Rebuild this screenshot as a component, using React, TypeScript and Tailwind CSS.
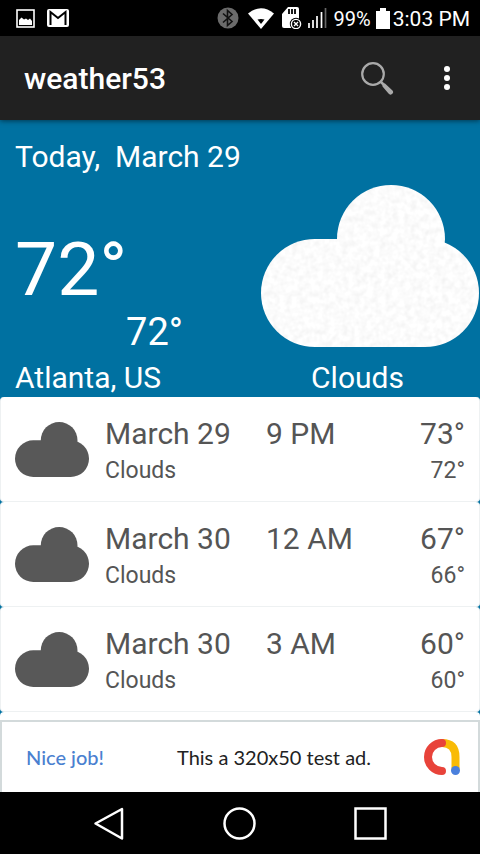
import { clsx } from 'clsx';

interface Forecast {
    date: string;
    time: string;
    condition: string;
    high: number;
    low: number;
}

const forecasts: Forecast[] = [
    { date: 'March 29', time: '9 PM', condition: 'Clouds', high: 73, low: 72 },
    { date: 'March 30', time: '12 AM', condition: 'Clouds', high: 67, low: 66 },
    { date: 'March 30', time: '3 AM', condition: 'Clouds', high: 60, low: 60 },
];

function Cloud({ className, textured }: { className?: string; textured?: boolean }) {
    return (
        <svg viewBox="0 0 218 162" className={clsx('block shrink-0', className)} aria-hidden="true">
            {textured && (
                <filter id="paper" x="0" y="0" width="1" height="1">
                    <feTurbulence type="fractalNoise" baseFrequency="0.16" numOctaves="2" seed="4" />
                    <feColorMatrix values="0.2 0 0 0 0.87  0.2 0 0 0 0.87  0.2 0 0 0 0.87  0 0 0 0 1" />
                    <feComposite in2="SourceGraphic" operator="in" />
                </filter>
            )}
            <g fill="currentColor" filter={textured ? 'url(#paper)' : undefined}>
                <circle cx="130" cy="54" r="54" />
                <rect y="54" width="218" height="108" rx="54" />
            </g>
        </svg>
    );
}

function StatusBar() {
    return (
        <div className="flex h-9 items-center justify-between bg-black pr-[10px] pl-4 text-white">
            <div className="flex items-center gap-3">
                <svg width="19" height="19" viewBox="0 0 19 19">
                    <rect x="1" y="1" width="17" height="17" fill="none" stroke="#fff" strokeWidth="1.6" />
                    <path d="M3 16V11L5.500 8.500L8 10.500L10 9.500L12 11L14 9.500L16 12V16Z" fill="#fff" />
                </svg>
                <svg width="22" height="18" viewBox="0 0 22 18">
                    <rect width="22" height="18" rx="2" fill="#fff" />
                    <path d="M3.500 16V3L11 9L18.500 3V16" fill="none" stroke="#000" strokeWidth="2" />
                </svg>
            </div>
            <div className="flex items-center">
                <svg width="22" height="22" viewBox="0 0 22 22" className="mr-[9px]">
                    <circle cx="11" cy="11" r="10.500" fill="#6b6b6b" />
                    <path d="M6 6.500L15 14.500L10.500 18.500V3.500L15 7.500L6 15.500" fill="none" stroke="#111" strokeWidth="1.6" />
                </svg>
                <svg width="26" height="21" viewBox="0 0 26 21" className="mr-2">
                    <path d="M0 5.500Q13 -5 26 5.500L13 21Z" fill="#fff" />
                    <path d="M9.500 11.500Q13 10.500 16.500 11.500L13 16Z" fill="#000" />
                </svg>
                <svg width="20" height="22" viewBox="0 0 20 22" className="mr-[6px]">
                    <path d="M6 0H15Q17 0 17 2V21H2Q0 21 0 19V7Z" fill="#fff" />
                    <path d="M7 2V7M10 2V7M13 2V7" stroke="#000" strokeWidth="1.8" />
                    <circle cx="14" cy="17" r="6.200" fill="#000" />
                    <circle cx="14" cy="17" r="4.600" fill="none" stroke="#fff" strokeWidth="1.4" />
                    <path d="M12 15L16 19M16 15L12 19" stroke="#fff" strokeWidth="1.4" />
                </svg>
                <svg width="19" height="22" viewBox="0 0 19 22" className="mr-[7px]">
                    <path d="M1 21V16M5 21V13M9 21V9M13.500 21V5" stroke="#fff" strokeWidth="1.7" />
                    <path d="M17.500 21V1" stroke="#666" strokeWidth="1.7" />
                </svg>
                <span className="mr-[5px] pt-px text-[20px] leading-6">99%</span>
                <svg width="14" height="21" viewBox="0 0 14 21" className="mr-[3px]">
                    <path d="M4 0H10V3H14V21H0V3H4Z" fill="#fff" />
                </svg>
                <span className="pt-px text-[21px] leading-6">3:03 PM</span>
            </div>
        </div>
    );
}

function Toolbar() {
    return (
        <header className="relative z-10 flex h-21 items-center bg-[#212121] pr-[17px] pl-6 text-white shadow-[0_1px_5px_rgba(0,0,0,0.5)]">
            <h1 className="grow pt-px text-[30px] leading-9 font-medium">weather53</h1>
            <button type="button" aria-label="Search" className="mr-9">
                <svg width="36" height="36" viewBox="0 0 36 36" className="block">
                    <circle cx="14" cy="14" r="10.800" fill="none" stroke="#aaa" strokeWidth="2.200" />
                    <path d="M21.500 21.500L25 25" stroke="#aaa" strokeWidth="2.500" />
                    <path d="M26 23.500L33.500 30.500Q35 32.500 33 34Q31 35.500 29.500 33.500L23.500 26.500Q23 23 26 23.500Z" fill="#aaa" />
                </svg>
            </button>
            <button type="button" aria-label="More options" className="flex w-8 justify-center">
                <svg width="6" height="26" viewBox="0 0 6 26" fill="#fff">
                    <circle cx="3" cy="4" r="3" />
                    <circle cx="3" cy="13" r="3" />
                    <circle cx="3" cy="22" r="3" />
                </svg>
            </button>
        </header>
    );
}

function Today() {
    return (
        <section className="px-[15px] pt-[19px] text-white">
            <h2 className="text-[30px] leading-9 whitespace-pre">Today,  March 29</h2>
            <div className="mt-[10px] flex justify-between">
                <div className="w-42 pt-11">
                    <p className="text-[75px] leading-20">72°</p>
                    <p className="mt-[3px] text-right text-[38px] leading-10">72°</p>
                </div>
                <Cloud className="-mr-[14px] h-[162px] w-[218px]" textured />
            </div>
            <div className="mt-2 grid grid-cols-2 pb-px text-[30px] leading-9">
                <p>Atlanta, US</p>
                <p className="-mr-[10px] text-center">Clouds</p>
            </div>
        </section>
    );
}

function ForecastRow({ date, time, condition, high, low }: Forecast) {
    return (
        <li className="flex h-[105px] items-center rounded-sm border-x border-b border-[#eef1f2] bg-white px-[14px] text-[#555]">
            <Cloud className="mr-4 h-[55px] w-[74px] text-[#585858]" />
            <div className="w-[161px] pt-[3px]">
                <p className="text-[30px] leading-9">{date}</p>
                <p className="mt-[5px] text-[23px] leading-7">{condition}</p>
            </div>
            <p className="grow self-start pt-[19px] text-[30px] leading-9">{time}</p>
            <div className="pt-[3px] text-right">
                <p className="text-[30px] leading-9">{high}°</p>
                <p className="mt-[5px] text-[23px] leading-7">{low}°</p>
            </div>
        </li>
    );
}

function AdBanner() {
    return (
        <a
            href="#ad"
            className="flex h-18 items-center border-2 border-b-0 border-[#d3dadb] bg-white pr-[17px] pl-6 font-['Lato',sans-serif] text-[20px] leading-6 text-[#222]"
        >
            <span className="font-medium text-[#4a80d0]">Nice job!</span>
            <span className="grow pl-[73px]">This a 320x50 test ad.</span>
            <svg width="38" height="38" viewBox="0 0 38 38" fill="none" strokeWidth="8" strokeLinecap="round">
                <path d="M19 5Q32.500 5 32.500 19V31" stroke="#f9bb06" />
                <path d="M19 5A14 14 0 0 0 19 33" stroke="#e8433a" />
                <circle cx="32.500" cy="32.500" r="4.500" fill="#4a80dd" />
            </svg>
        </a>
    );
}

function NavBar() {
    return (
        <nav className="flex h-[62px] shrink-0 justify-center bg-black">
            <button type="button" aria-label="Back" className="flex w-[131px] items-center justify-center">
                <svg width="36" height="36" viewBox="0 0 36 36" fill="none" stroke="#fff" strokeWidth="2.500">
                    <path d="M31 4V33.500L4.500 18.500Z" strokeLinejoin="round" />
                </svg>
            </button>
            <button type="button" aria-label="Home" className="flex w-[131px] items-center justify-center">
                <svg width="36" height="36" viewBox="0 0 36 36" fill="none" stroke="#fff" strokeWidth="2.500">
                    <circle cx="17.500" cy="18.500" r="15" />
                </svg>
            </button>
            <button type="button" aria-label="Recent apps" className="flex w-[131px] items-center justify-center">
                <svg width="36" height="36" viewBox="0 0 36 36" fill="none" stroke="#fff" strokeWidth="2.500">
                    <rect x="2.500" y="3.500" width="30" height="30" />
                </svg>
            </button>
        </nav>
    );
}

export default function App() {
    return (
        <div className="flex min-h-screen flex-col bg-[#0071a1] font-['Roboto',sans-serif]">
            <StatusBar />
            <Toolbar />
            <main className="flex grow flex-col">
                <Today />
                <ul>
                    {forecasts.map((item) => (
                        <ForecastRow key={item.date + item.time} {...item} />
                    ))}
                </ul>
                {/* top edge of the next card, cut off by the ad */}
                <div className="min-h-2 grow rounded-t-sm bg-white" />
            </main>
            <AdBanner />
            <NavBar />
        </div>
    );
}
